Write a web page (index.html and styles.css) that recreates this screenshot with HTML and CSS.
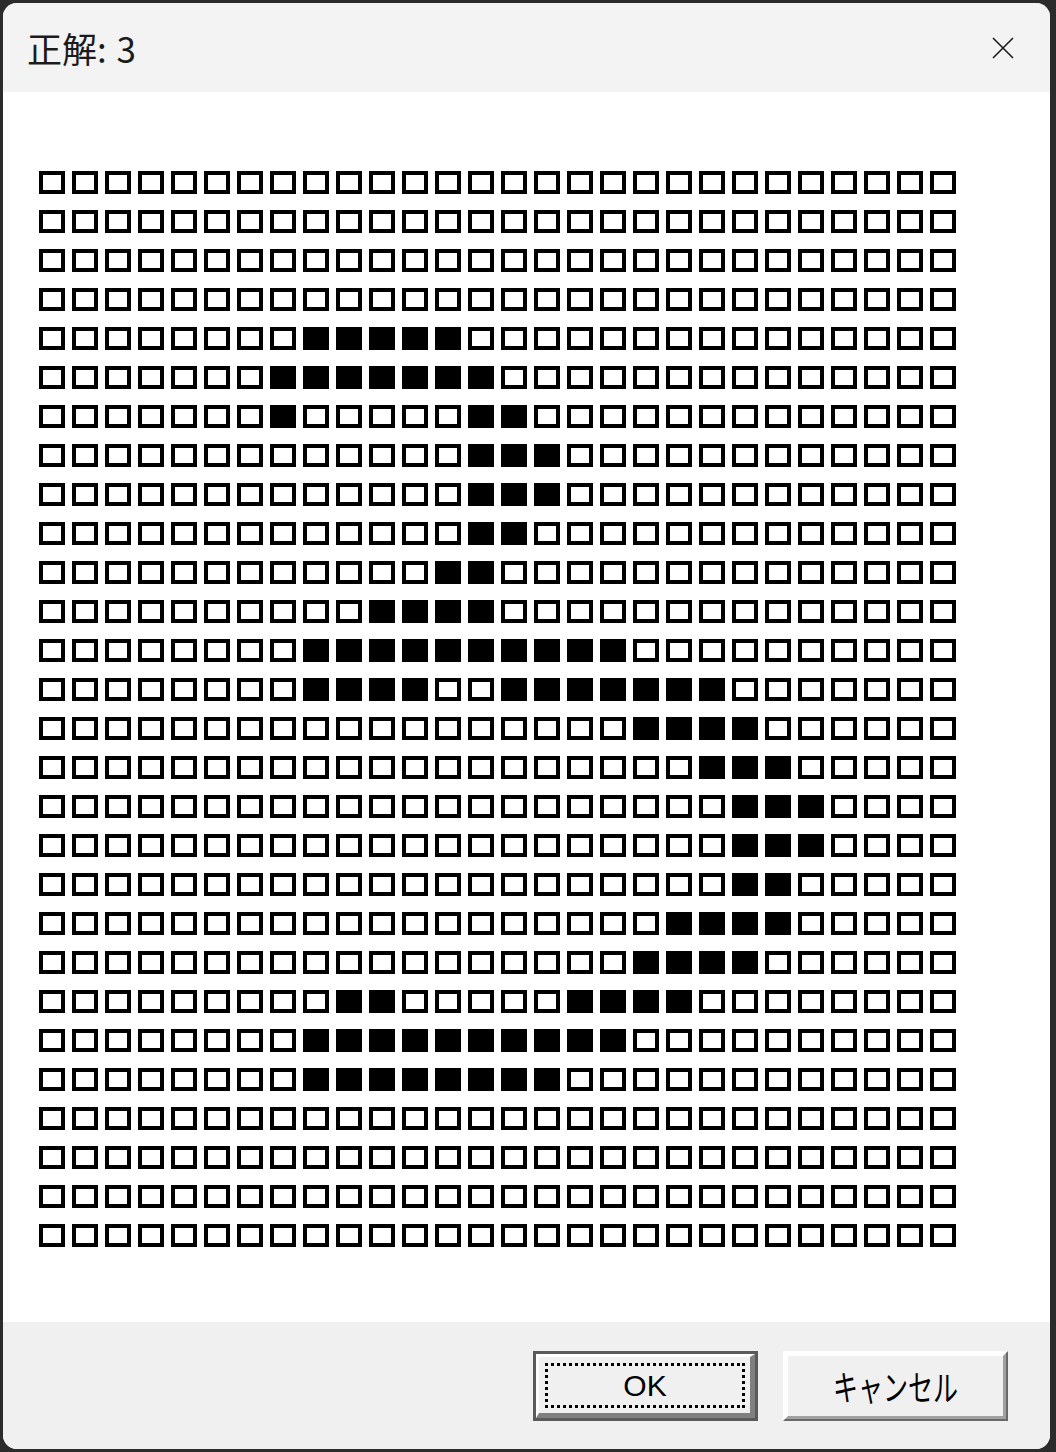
FILE: index.html
```html
<!DOCTYPE html>
<html lang="ja">
<head>
  <meta charset="UTF-8" />
  <meta name="viewport" content="width=device-width, initial-scale=1" />
  <title>正解: 3</title>
  <link rel="stylesheet" href="styles.css">
</head>
<body>

  <div class="window">
    <div class="titlebar">
      <span class="title">正解: 3</span>
      <button class="close" aria-label="閉じる">
        <svg width="22" height="22" viewBox="0 0 22 22">
          <path d="M1 1 L21 21 M21 1 L1 21" stroke="#1b1b1b" stroke-width="1.6" fill="none" />
        </svg>
      </button>
    </div>

    <div class="content">
      <div class="grid" id="grid"></div>
    </div>

    <div class="footer">
      <button class="btn default"><span class="face"><span class="focus"><span class="label ok">OK</span></span></span></button>
      <button class="btn"><span class="face"><span class="label cancel">キャンセル</span></span></button>
    </div>
  </div>

  <script>
    const grid = document.getElementById('grid');

    // filled ranges per row (start, end columns), 28 x 28 cells
    const marks = {
      4: [[8, 12]],
      5: [[7, 13]],
      6: [[7, 7], [13, 14]],
      7: [[13, 15]],
      8: [[13, 15]],
      9: [[13, 14]],
      10: [[12, 13]],
      11: [[10, 13]],
      12: [[8, 17]],
      13: [[8, 11], [14, 20]],
      14: [[18, 21]],
      15: [[20, 22]],
      16: [[21, 23]],
      17: [[21, 23]],
      18: [[21, 22]],
      19: [[19, 22]],
      20: [[18, 21]],
      21: [[9, 10], [16, 19]],
      22: [[8, 17]],
      23: [[8, 15]],
    };

    for (let r = 0; r < 28; r++) {
      const ranges = marks[r] || [];
      for (let c = 0; c < 28; c++) {
        const cell = document.createElement('span');
        const on = ranges.some(([a, b]) => c >= a && c <= b);
        cell.className = on ? 'cell on' : 'cell';
        grid.appendChild(cell);
      }
    }
  </script>
</body>
</html>
```

FILE: styles.css
```css
html, body {
  margin: 0;
  padding: 0;
}

body {
  background: #2b2b2b;
  font-family: "Noto Sans CJK JP", sans-serif;
  color: #000;
}

.window {
  margin: 3px 6px 3px 3px;
  height: 1446px;
  border-radius: 14px;
  overflow: hidden;
  display: flex;
  flex-direction: column;
  background: #fff;
}

.titlebar {
  height: 89px;
  flex: none;
  background: #f3f3f3;
  display: flex;
  align-items: center;
  padding-left: 24px;
}

.title {
  flex: 1;
  font-size: 35px;
  color: #1b1b1b;
  word-spacing: 2px;
}

.close {
  width: 22px;
  height: 22px;
  margin-right: 36px;
  padding: 0;
  border: none;
  background: none;
  display: flex;
}

.content {
  flex: 1;
  padding: 79px 0 0 36px;
}

.grid {
  display: grid;
  grid-template-columns: repeat(28, 26px);
  grid-auto-rows: 23px;
  column-gap: 7px;
  row-gap: 16px;
}

.cell {
  box-sizing: border-box;
  border: 4px solid #000;
}

.cell.on {
  background: #000;
}

.footer {
  height: 127px;
  flex: none;
  box-sizing: border-box;
  background: #f0f0f0;
  display: flex;
  justify-content: flex-end;
  align-items: flex-start;
  gap: 25px;
  padding: 29px 42px 0 0;
}

.btn {
  width: 225px;
  height: 70px;
  padding: 0;
  box-sizing: border-box;
  background: #f0f0f0;
  border: 2px solid;
  border-color: #fff #696969 #696969 #fff;
  font-family: inherit;
  color: #000;
}

.btn.default {
  border: 3px solid #5a5a5a;
}

.face {
  display: flex;
  align-items: center;
  justify-content: center;
  height: 100%;
  box-sizing: border-box;
  border: 3px solid;
  border-color: #fff #a0a0a0 #a0a0a0 #fff;
}

.btn.default .face {
  border-width: 3px 5px 5px 3px;
  border-color: #fff #808080 #808080 #fff;
}

/* dotted focus rectangle drawn with gradients so the dots stay square */
.focus {
  flex: 1;
  align-self: stretch;
  margin: 6px 5px 5px 6px;
  display: flex;
  align-items: center;
  justify-content: center;
  background:
    repeating-linear-gradient(90deg, #000 0 3px, transparent 3px 6px) top / 100% 3px no-repeat,
    repeating-linear-gradient(90deg, #000 0 3px, transparent 3px 6px) bottom / 100% 3px no-repeat,
    repeating-linear-gradient(0deg, #000 0 3px, transparent 3px 6px) left / 3px 100% no-repeat,
    repeating-linear-gradient(0deg, #000 0 3px, transparent 3px 6px) right / 3px 100% no-repeat;
}

.label.ok {
  font-family: "Liberation Sans", sans-serif;
  font-size: 30px;
  line-height: 1;
}

.label.cancel {
  display: inline-block;
  font-size: 25px;
  line-height: 1;
  transform: scaleY(1.4);
}
```
